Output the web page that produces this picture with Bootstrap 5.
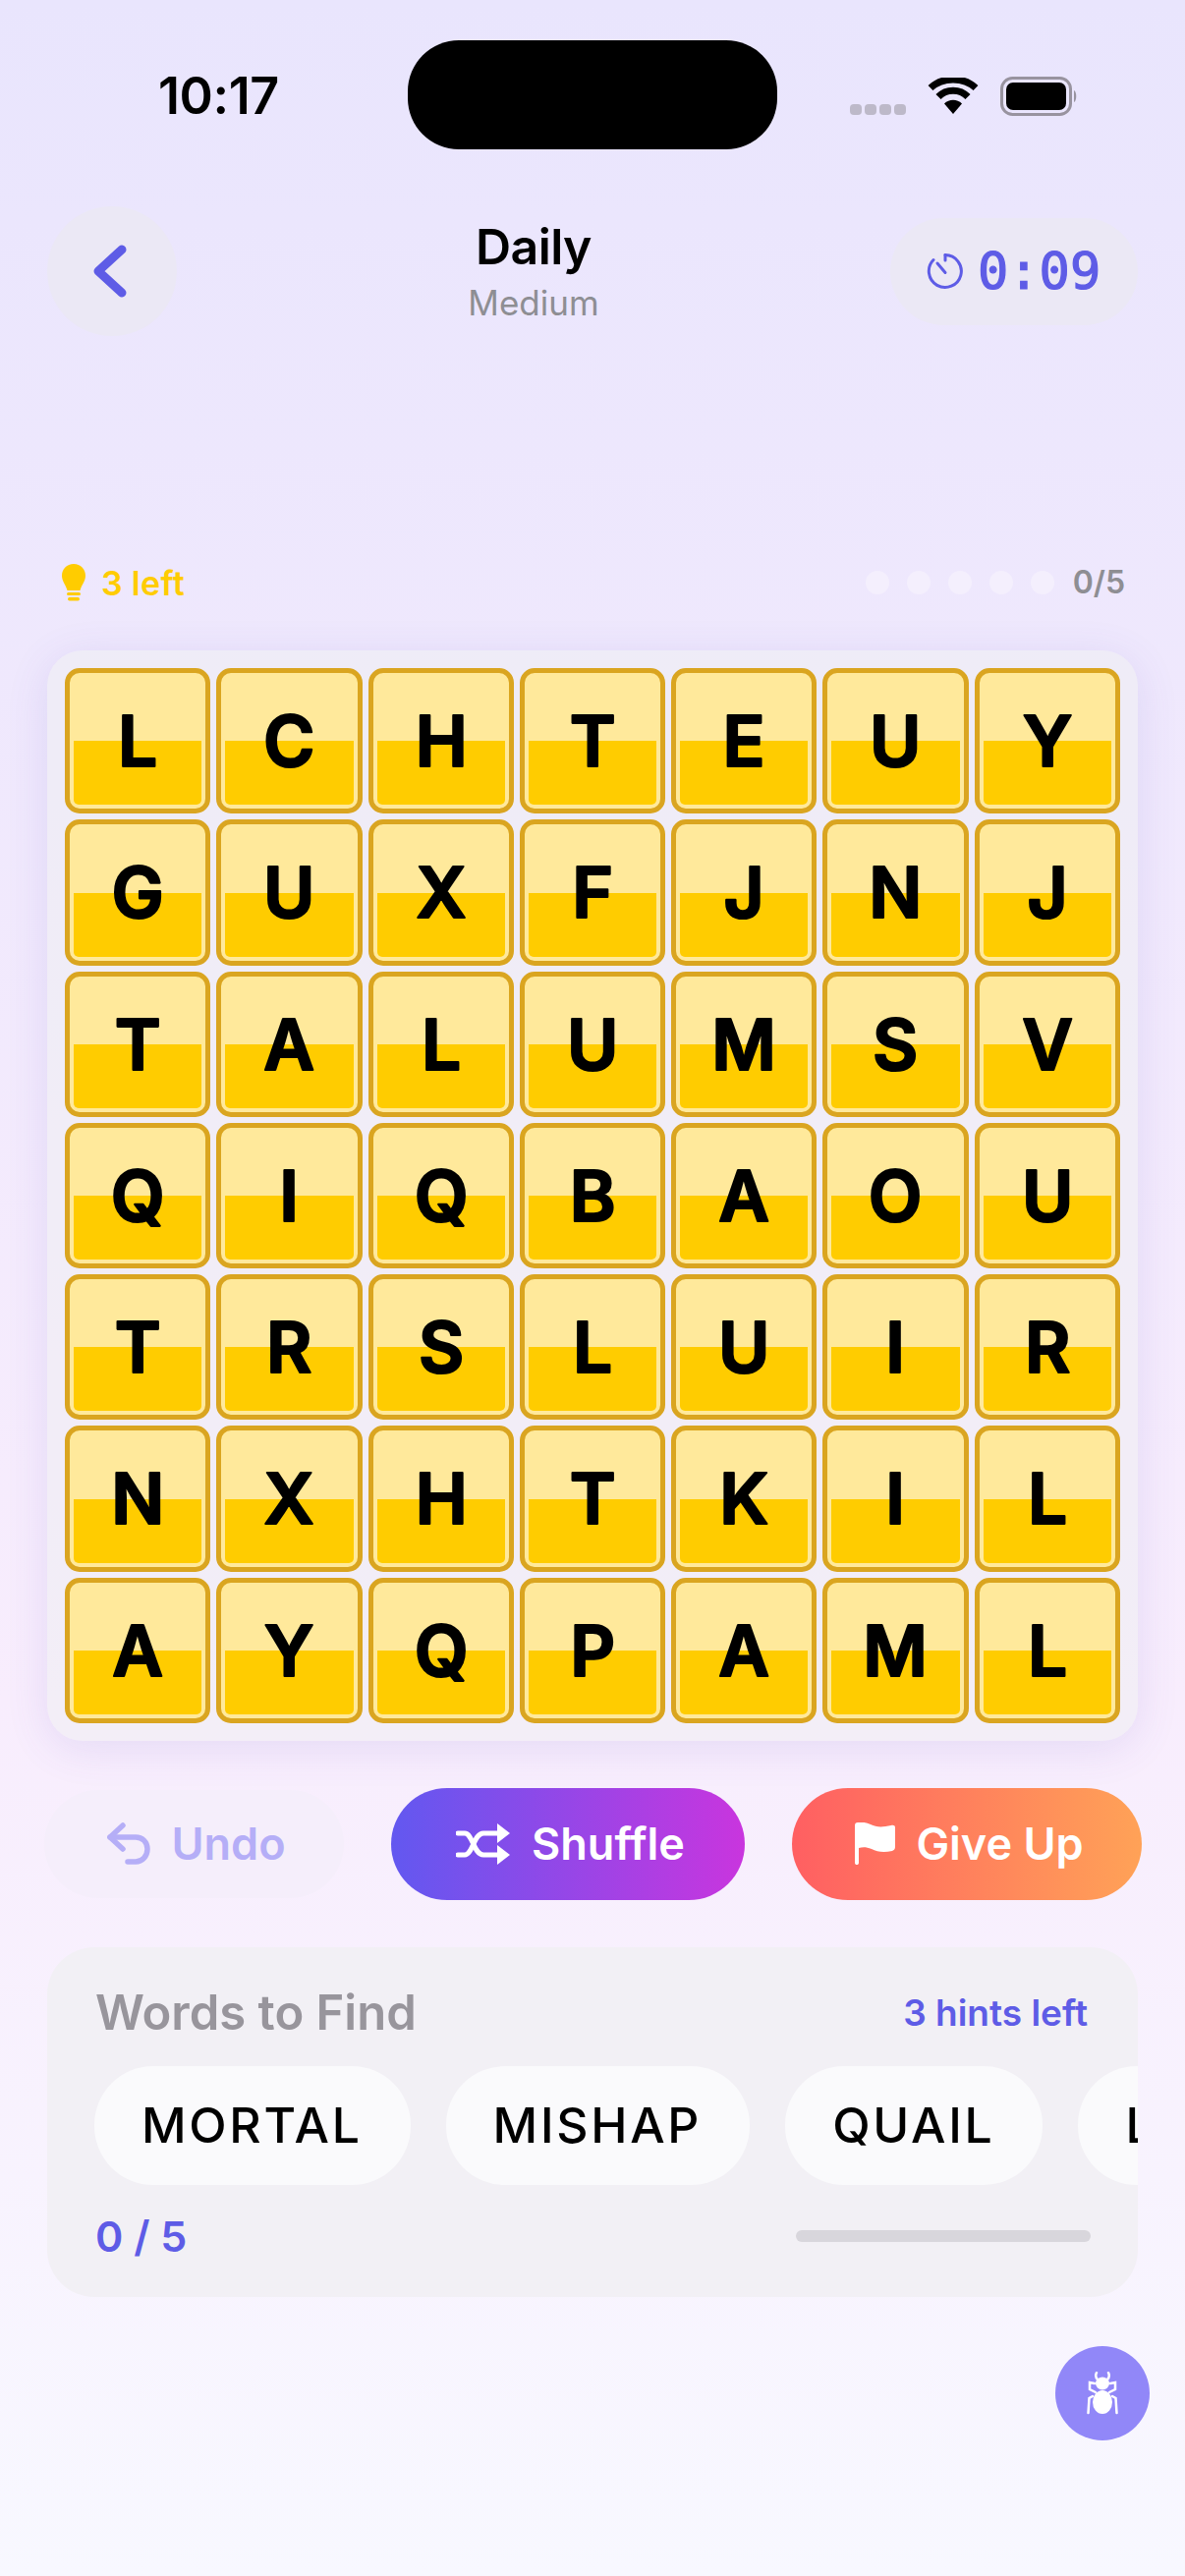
<!DOCTYPE html>
<html lang="en">
<head>
    <meta charset="UTF-8">
    <meta name="viewport" content="width=device-width, initial-scale=1.0">
    <title>Daily</title>
    <link href="https://cdn.jsdelivr.net/npm/bootstrap@5.3.0/dist/css/bootstrap.min.css" rel="stylesheet">
    <style>
        html, body { height: 100%; }
        body {
            width: 1206px; height: 2622px; overflow: hidden; color: #000;
            font-family: Inter, "Liberation Sans", sans-serif;
            background: linear-gradient(180deg, #e9e5fd 0%, #f8edfd 66%, #f8f8ff 100%);
        }
        .status-row { height: 152px; padding: 41px 0 0 161px; }
        .status-time { width: 254px; margin-top: 31px; font-size: 52px; font-weight: 600; letter-spacing: -.4px; line-height: 1; }
        .island { width: 376px; height: 111px; background: #000; border-radius: 52px; }
        .status-icons { margin-left: 74px; }
        .sig-dots { margin-top: 65px; gap: 3px; }
        .sig-dot { width: 12px; height: 11px; border-radius: 4px; background: #bdb9c9; }
        .wifi-icon { margin: 38px 0 0 22px; }
        .batt-icon { margin: 37px 0 0 22px; }

        .head-row { margin-top: 58px; padding: 0 48px; height: 132px; }
        .back-btn { width: 132px; height: 132px; background: #ebe8f5; }
        .back-btn svg { margin-left: -6px; }
        .title-main { margin-top: 4px; font-size: 50px; font-weight: 600; line-height: 56px; letter-spacing: -.6px; }
        .title-sub { margin-top: 4px; font-size: 35px; line-height: 50px; color: #8e8e93; }
        .timer-pill { width: 252px; height: 109px; background: #ebe8f5; padding-left: 37px; gap: 14px; }
        .timer-text {
            font-family: "DejaVu Sans Mono", monospace; font-size: 52px; color: #5e5ce6; line-height: 1;
            -webkit-text-stroke: 1.2px #5e5ce6;
        }

        .hint-row { margin-top: 232px; height: 38px; padding: 0 61px 0 63px; }
        .hint-lead { gap: 16px; }
        .hint-count { font-size: 34px; font-weight: 600; color: #ffcc00; letter-spacing: .3px; }
        .found-lead { gap: 18px; }
        .dot-found { width: 24px; height: 24px; border-radius: 50%; background: #f4effd; }
        .found-count { font-size: 32px; font-weight: 600; color: #8e8e93; margin-left: 1px; }

        .board {
            margin: 50px 48px 0; padding: 18px; border-radius: 36px;
            display: grid; grid-template-columns: repeat(7, 1fr); gap: 6px;
            background: rgba(238, 238, 242, .55);
            box-shadow: 0 8px 44px rgba(90, 70, 190, .12);
        }
        .tile { aspect-ratio: 1; border: 5px solid #daa520; border-radius: 15px; background: #ffe99b; }
        .tile-fill { left: 4px; right: 4px; bottom: 4px; height: 65px; background: #ffcc00; border-radius: 0 0 5px 5px; }
        .tile-glyph { position: relative; z-index: 1; width: 100%; height: 100%; }
        .tile-glyph text {
            font-family: Inter, "Liberation Sans", sans-serif; font-size: 71px; font-weight: 600;
            fill: #000; stroke: #000; stroke-width: 2.2px; stroke-linejoin: round; text-anchor: middle;
        }

        .action-row { margin-top: 48px; height: 114px; gap: 48px; }
        .act-btn {
            border: 0; height: 114px; font-size: 45px; font-weight: 600; color: #fff; gap: 21px; padding: 0;
            border-radius: 57px;
        }
        .act-undo { width: 305px; height: 110px; padding-left: 6px; color: #b5aef7; background: #f5eefb; }
        .act-undo:hover, .act-undo:active { color: #b5aef7; background: #f5eefb; }
        .act-shuffle { width: 360px; padding-left: 6px; background: linear-gradient(90deg, #6258f0, #c935de); }
        .act-giveup { width: 356px; padding-left: 6px; background: linear-gradient(90deg, #ff5f62, #ffa257); }
        .act-shuffle:hover, .act-giveup:hover { color: #fff; }

        .words-panel {
            margin: 48px 48px 0; height: 356px; padding: 37px 51px 0 48px; border-radius: 48px;
            background: #f2f0f5; overflow: hidden;
        }
        .words-title { font-size: 49px; font-weight: 600; color: #98959c; line-height: 60px; margin-left: 1px; }
        .hints-left { font-size: 37px; font-weight: 600; color: #5e5ce6; }
        .chip-row { margin: 24px -51px 0 0; gap: 36px; overflow: hidden; }
        .word-chip {
            flex: none; height: 121px; padding: 0 49px 0 48px; border-radius: 60px; background: #fafafc;
            font-size: 50px; font-weight: 500; letter-spacing: 2.7px; line-height: 121px;
        }
        .words-foot { margin-top: 22px; }
        .words-count { font-size: 43px; font-weight: 600; color: #5e5ce6; margin-left: 1px; line-height: 60px; }
        .words-track { width: 300px; height: 12px; border-radius: 6px; background: #d8d6dc; margin-right: -3px; }

        .debug-fab { right: 36px; top: 2388px; width: 96px; height: 96px; background: #9187f8; }
    </style>
</head>
<body class="position-relative">
    <!-- status bar -->
    <div class="status-row d-flex align-items-start">
        <div class="status-time">10:17</div>
        <div class="island"></div>
        <div class="status-icons d-flex align-items-start">
            <div class="sig-dots d-flex">
                <span class="sig-dot"></span><span class="sig-dot"></span><span class="sig-dot"></span><span class="sig-dot"></span>
            </div>
            <svg class="wifi-icon" width="52" height="37" viewBox="0 0 52 37">
                <path d="M26 37 17 26.500C22 21.500 30 21.500 35 26.500Z" fill="#000"/>
                <path d="M11 19.500C19 11 33 11 41 19.500" fill="none" stroke="#000" stroke-width="7"/>
                <path d="M3 10.500C15 -1 37 -1 49 10.500" fill="none" stroke="#000" stroke-width="7"/>
            </svg>
            <svg class="batt-icon" width="80" height="40" viewBox="0 0 80 40">
                <rect x="1.500" y="1.500" width="70" height="37" rx="11" fill="none" stroke="#98939f" stroke-width="3"/>
                <rect x="6" y="6" width="61" height="28" rx="7" fill="#000"/>
                <path d="M75 14C78 15 78 25 75 26Z" fill="#98939f"/>
            </svg>
        </div>
    </div>

    <!-- header -->
    <div class="head-row d-flex justify-content-between align-items-center">
        <button class="back-btn btn rounded-circle border-0 p-0 d-flex align-items-center justify-content-center">
            <svg width="40" height="62" viewBox="0 0 40 62"><path d="M33 9 9 31 33 53" fill="none" stroke="#5e5ce6" stroke-width="9" stroke-linecap="round" stroke-linejoin="round"/></svg>
        </button>
        <div class="text-center">
            <div class="title-main">Daily</div>
            <div class="title-sub">Medium</div>
        </div>
        <div class="timer-pill rounded-pill d-flex align-items-center">
            <svg width="38" height="38" viewBox="0 0 38 38" fill="none" stroke="#5e5ce6" stroke-width="3" stroke-linecap="round">
                <path d="M19 2.500A16.500 16.500 0 1 1 7 7.500"/><path d="M19 2.500V8"/><path d="M11 11 19 20.500"/>
            </svg>
            <span class="timer-text">0:09</span>
        </div>
    </div>

    <!-- hints + progress dots -->
    <div class="hint-row d-flex justify-content-between align-items-center">
        <div class="hint-lead d-flex align-items-center">
            <svg width="24" height="38" viewBox="0 0 24 38" fill="#ffcc00">
                <path d="M12 0C5 0 0 5 0 12c0 6 4 9 5.500 15h13C20 21 24 18 24 12 24 5 19 0 12 0Z"/>
                <rect x="5" y="29" width="14" height="3" rx="1.500"/><rect x="6" y="34" width="12" height="3.500" rx="1.700"/>
            </svg>
            <span class="hint-count">3 left</span>
        </div>
        <div class="found-lead d-flex align-items-center">
            <span class="dot-found"></span><span class="dot-found"></span><span class="dot-found"></span><span class="dot-found"></span><span class="dot-found"></span>
            <span class="found-count">0/5</span>
        </div>
    </div>

    <!-- letter grid, filled in below -->
    <div class="board" id="board"></div>

    <!-- actions -->
    <div class="action-row d-flex justify-content-center align-items-center">
        <button class="btn act-btn act-undo d-flex align-items-center justify-content-center">
            <svg width="44" height="44" viewBox="0 0 44 44" fill="none" stroke="#b5aef7" stroke-width="5.500" stroke-linecap="round" stroke-linejoin="round">
                <path d="M16 3 3 15 16 27"/><path d="M3 15H29C36 15 41 20 41 27S36 40 29 40H21"/>
            </svg>
            Undo
        </button>
        <button class="btn act-btn act-shuffle d-flex align-items-center justify-content-center">
            <svg width="56" height="44" viewBox="0 0 56 44" fill="none" stroke="#fff" stroke-width="5" stroke-linecap="round">
                <path d="M2 11H9C17 11 18 33 28 33H42"/><path d="M2 33H9C17 33 18 11 28 11H42"/>
                <path d="M42 1 55 11 42 21Z" fill="#fff" stroke="none"/><path d="M42 23 55 33 42 43Z" fill="#fff" stroke="none"/>
            </svg>
            Shuffle
        </button>
        <button class="btn act-btn act-giveup d-flex align-items-center justify-content-center">
            <svg width="41" height="44" viewBox="0 0 41 44" fill="#fff">
                <path d="M0 3C0 1 1 0 3 0c5-.5 9 0 13 2 6 3 12 3 21 1 2-.5 4 0 4 2v20c0 2-1 3-3 4-9 2-15 1-21-2-5-2-9-2-13-1v15c0 1.500-1 2-2 2s-2-.5-2-2Z"/>
            </svg>
            Give Up
        </button>
    </div>

    <!-- words -->
    <div class="words-panel">
        <div class="d-flex justify-content-between align-items-center">
            <span class="words-title">Words to Find</span>
            <span class="hints-left">3 hints left</span>
        </div>
        <div class="chip-row d-flex">
            <span class="word-chip">MORTAL</span>
            <span class="word-chip">MISHAP</span>
            <span class="word-chip">QUAIL</span>
            <span class="word-chip">LUNAR</span>
        </div>
        <div class="words-foot d-flex justify-content-between align-items-center">
            <span class="words-count">0 / 5</span>
            <div class="words-track"></div>
        </div>
    </div>

    <!-- debug button -->
    <button class="debug-fab btn rounded-circle border-0 p-0 position-absolute d-flex align-items-center justify-content-center">
        <svg width="32" height="44" viewBox="0 0 32 44" fill="#fff" stroke="#fff">
            <ellipse cx="16" cy="12" rx="7" ry="6.500" stroke="none"/>
            <ellipse cx="16" cy="31" rx="10" ry="12" stroke="none"/>
            <g fill="none" stroke-width="2.500" stroke-linecap="round">
                <path d="M11 8C9 6 9 3 10 1"/><path d="M21 8C23 6 23 3 22 1"/>
                <path d="M8 12 3 11V18L9 21"/><path d="M24 12 29 11V18L23 21"/>
                <path d="M6 25 2.500 27 1.500 42"/><path d="M26 25 29.500 27 30.500 42"/>
            </g>
        </svg>
    </button>

    <script>
        const filas = ['LCHTEUY', 'GUXFJNJ', 'TALUMSV', 'QIQBAOU', 'TRSLUIR', 'NXHTKIL', 'AYQPAML'];
        const board = document.getElementById('board');
        filas.join('').split('').forEach(letra => {
            const tile = document.createElement('div');
            tile.className = 'tile position-relative';
            // svg text so the stroke can have round joins, the letters in the app are rounded
            tile.innerHTML = `<div class="tile-fill position-absolute"></div><svg class="tile-glyph" viewBox="0 0 138 138"><text x="69" y="95">${letra}</text></svg>`;
            board.appendChild(tile);
        });
    </script>
    <script src="https://cdn.jsdelivr.net/npm/bootstrap@5.3.0/dist/js/bootstrap.bundle.min.js"></script>
</body>
</html>
